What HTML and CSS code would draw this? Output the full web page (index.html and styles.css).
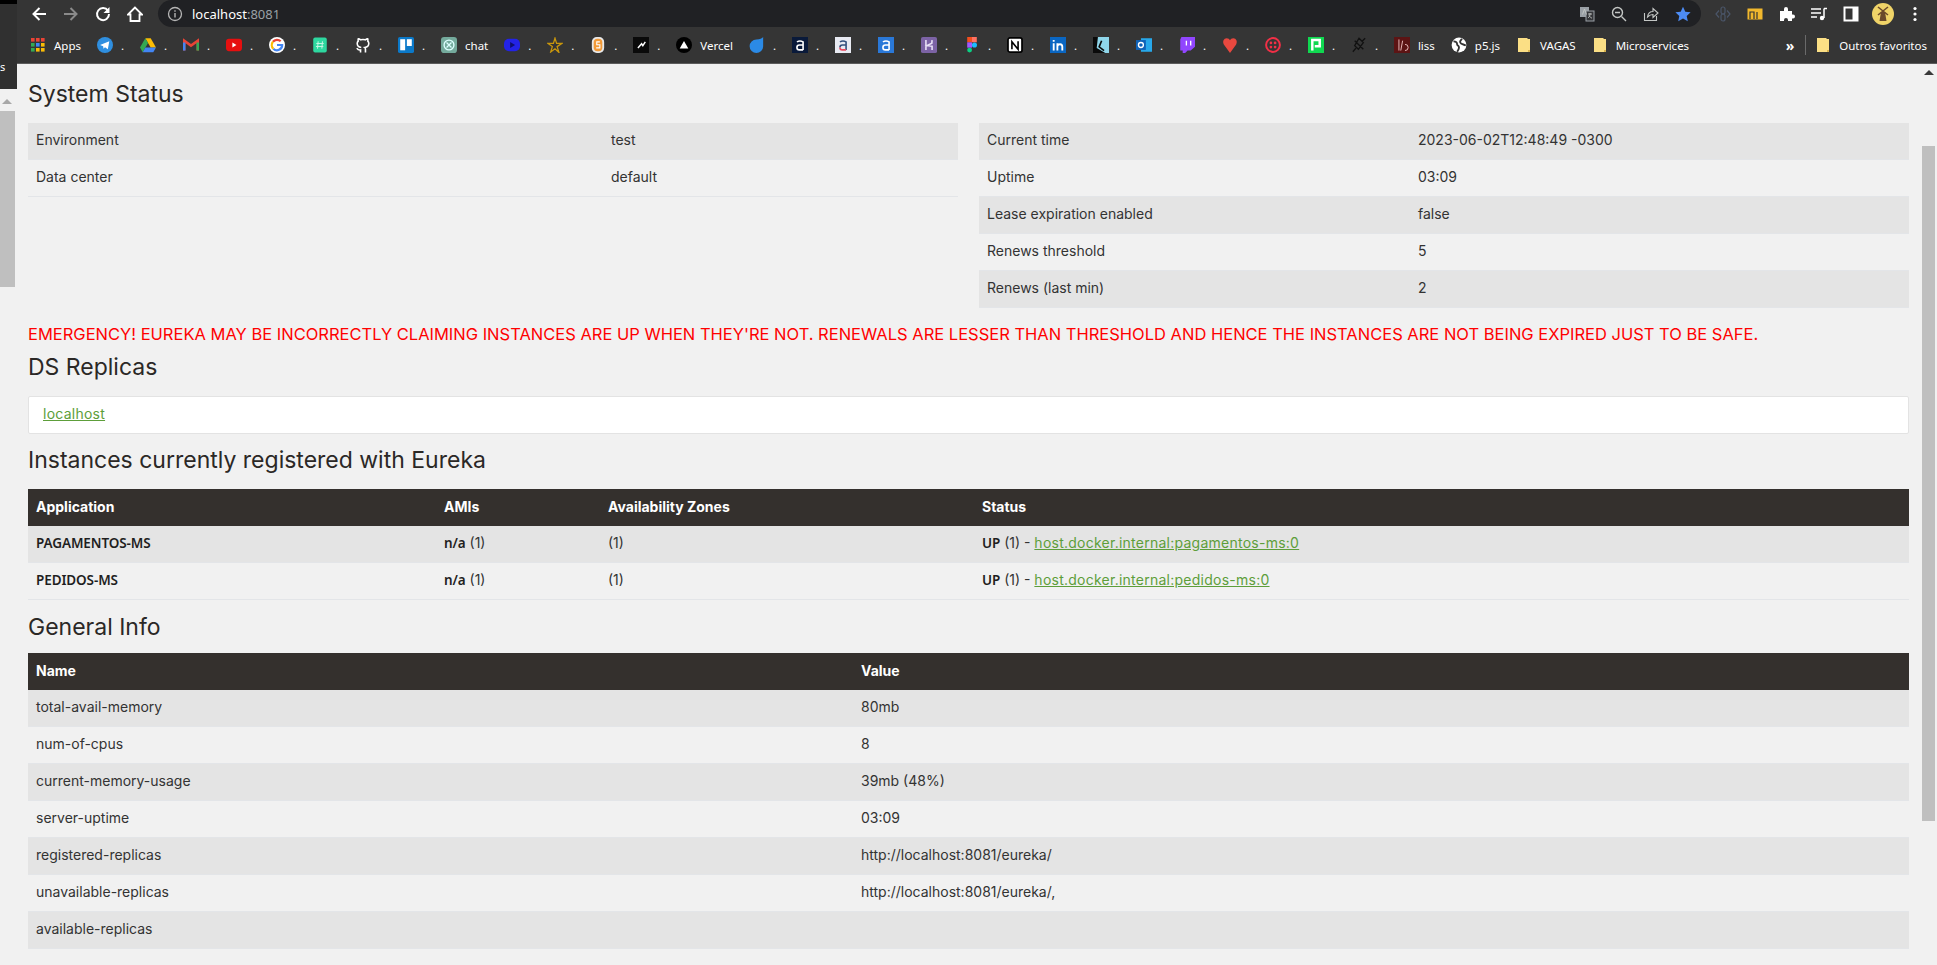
FILE: index.html
```html
<!DOCTYPE html>
<html lang="en">

<head>
    <meta charset="UTF-8">
    <meta name="viewport" content="width=device-width, initial-scale=1.0">
    <title>Eureka</title>
    <link rel="stylesheet" href="styles.css">
</head>

<body>
    <!-- Left-hand window edge -->
    <div class="side-strip">
        <div class="side-cap"></div>
        <div class="side-tab">s</div>
        <div class="side-arrow"></div>
        <div class="side-thumb"></div>
    </div>

    <div class="window">
        <!-- Browser toolbar -->
        <div class="toolbar">
            <div class="nav-buttons">
                <div class="slot"><svg class="icon" viewBox="0 0 16 16"><path d="M15 8H3M8.500 2 2.500 8l6 6" fill="none" stroke="#fff" stroke-width="2"/></svg></div>
                <div class="slot"><svg class="icon" viewBox="0 0 16 16"><path d="M1 8h12M7.500 2l6 6-6 6" fill="none" stroke="#8a8a8a" stroke-width="2"/></svg></div>
                <div class="slot"><svg class="icon" viewBox="0 0 16 16"><path d="M13 4.800A6 6 0 1 0 14 8" fill="none" stroke="#fff" stroke-width="2"/><path d="M14.500 1v6h-6z" fill="#fff"/></svg></div>
                <div class="slot"><svg class="icon" viewBox="0 0 16 16"><path d="M8 1.500 1 8.500h2.500V15h9V8.500H15z" fill="none" stroke="#fff" stroke-width="1.800"/></svg></div>
            </div>
            <div class="omnibox">
                <svg class="icon" viewBox="0 0 16 16"><circle cx="8" cy="8" r="6.500" fill="none" stroke="#b5b5b5" stroke-width="1.300"/><path d="M8 7v4.500M8 4.200v1.500" stroke="#b5b5b5" stroke-width="1.400"/></svg>
                <span class="url">localhost<span class="url-port">:8081</span></span>
                <div class="omni-actions">
                    <div class="slot"><svg class="icon" viewBox="0 0 16 16"><rect x="1" y="1" width="9" height="10" fill="#9aa0a6"/><rect x="7" y="5" width="8" height="10" fill="#35363a" stroke="#9aa0a6"/><path d="M3.500 8.500 5.500 3l2 5.500M9 8h4M11 7v1c0 2-1 3-2 4M10 9.500c1 1.500 2 2.500 3 2.500" fill="none" stroke="#c4c7c5" stroke-width=".9"/></svg></div>
                    <div class="slot"><svg class="icon" viewBox="0 0 16 16"><circle cx="6.500" cy="6.500" r="5" fill="none" stroke="#c4c7c5" stroke-width="1.400"/><path d="m10.500 10.500 4.500 4.500M4 6.500h5" stroke="#c4c7c5" stroke-width="1.400"/></svg></div>
                    <div class="slot"><svg class="icon" viewBox="0 0 16 16"><path d="M1.500 7v7.500h12V10" fill="none" stroke="#c4c7c5" stroke-width="1.100"/><path d="M4.500 11C5 7.500 7.500 5.500 10 5.500V2.500L15 7l-5 4.500V8.500C8 8.500 6 9.500 4.500 11z" fill="none" stroke="#c4c7c5" stroke-width="1.100"/></svg></div>
                    <div class="slot"><svg class="icon" viewBox="0 0 16 16"><path d="m8 .8 2.300 4.900 5.300.6-3.900 3.600 1.100 5.300L8 12.500l-4.800 2.700 1.100-5.300L.4 6.300l5.300-.6z" fill="#4d8cf5"/></svg></div>
                </div>
            </div>
            <div class="ext-icons">
                <div class="slot"><svg class="icon" viewBox="0 0 16 16"><path d="M4 4.500 1 8l3 3.500M12 4.500 15 8l-3 3.500" fill="none" stroke="#4a5568" stroke-width="1.200"/><rect x="6" y="1" width="4" height="7" rx="2" fill="none" stroke="#4a5568" stroke-width="1.200"/><rect x="6" y="8" width="4" height="7" rx="2" fill="none" stroke="#4a5568" stroke-width="1.200"/></svg></div>
                <div class="slot"><svg class="icon" viewBox="0 0 16 16"><rect x="0.500" y="2.500" width="15" height="11" fill="#f1b82d"/><path d="M3 13V6h4v7M10 6v7" fill="none" stroke="#333" stroke-width="1.200"/></svg></div>
                <div class="slot"><svg class="icon" viewBox="0 0 16 16"><path d="M1 5h4V3a2 2 0 0 1 4 0v2h4v3.500h1a2 2 0 0 1 0 4h-1V15H9v-1a2 2 0 0 0-4 0v1H1z" fill="#fff"/></svg></div>
                <div class="slot"><svg class="icon" viewBox="0 0 16 16"><path d="M0 3h10M0 7h10M0 11h6" stroke="#fff" stroke-width="1.500"/><path d="M13 2.500h3M13 2.500V12" stroke="#fff" stroke-width="1.500" fill="none"/><circle cx="11" cy="12" r="2.200" fill="#fff"/></svg></div>
                <div class="slot"><svg class="icon" viewBox="0 0 16 16"><rect x="1.500" y="1.500" width="13" height="13" fill="none" stroke="#fff" stroke-width="2"/><rect x="9.500" y="1.500" width="5" height="13" fill="#fff"/></svg></div>
                <div class="slot"><svg class="avatar" viewBox="0 0 22 22"><circle cx="11" cy="11" r="11" fill="#f0d468"/><path d="M9 9h4l1.500 9h-7z" fill="#6b4a2b"/><path d="M6 4l10 8M16 4 6 12" stroke="#6b4a2b" stroke-width="1.600"/></svg></div>
                <div class="slot"><svg class="icon" viewBox="0 0 16 16"><circle cx="8" cy="2.500" r="1.600" fill="#fff"/><circle cx="8" cy="8" r="1.600" fill="#fff"/><circle cx="8" cy="13.500" r="1.600" fill="#fff"/></svg></div>
            </div>
        </div>

        <!-- Bookmarks -->
        <div class="bookmarks">
            <div class="bm bm-text"><svg class="icon" viewBox="0 0 16 16"><rect x="1" y="1" width="3.600" height="3.600" fill="#ea4335"/><rect x="6" y="1" width="3.600" height="3.600" fill="#ea4335"/><rect x="11" y="1" width="3.600" height="3.600" fill="#ea4335"/><rect x="1" y="6" width="3.600" height="3.600" fill="#34a853"/><rect x="6" y="6" width="3.600" height="3.600" fill="#4285f4"/><rect x="11" y="6" width="3.600" height="3.600" fill="#fbbc05"/><rect x="1" y="11" width="3.600" height="3.600" fill="#34a853"/><rect x="6" y="11" width="3.600" height="3.600" fill="#fbbc05"/><rect x="11" y="11" width="3.600" height="3.600" fill="#fbbc05"/></svg><span>Apps</span></div>
            <div class="bm bm-dot"><svg class="icon" viewBox="0 0 13 13"><circle cx="6.500" cy="6.500" r="6.500" fill="#2f8fe0"/><path d="M2.500 6.500 10 3.500 8.800 10 6.500 8.300 5.300 9.500 5 7.500z" fill="#fff"/></svg><span>.</span></div>
            <div class="bm bm-dot"><svg class="icon" viewBox="0 0 13 13"><path d="M4.300 1h4.400L13 8.500H8.700z" fill="#fbbc05"/><path d="M4.300 1 0 8.500l2.200 3.800 4.300-7.500z" fill="#34a853"/><path d="M2.200 12.300h8.600L13 8.500H4.400z" fill="#4285f4"/></svg><span>.</span></div>
            <div class="bm bm-dot"><svg class="icon" viewBox="0 0 13 13"><path d="M1 11V3l5.500 4L12 3v8" fill="none" stroke="#ea4335" stroke-width="2"/><path d="M1 4.500V11" stroke="#4285f4" stroke-width="2"/><path d="M12 4.500V11" stroke="#34a853" stroke-width="2"/></svg><span>.</span></div>
            <div class="bm bm-dot"><svg class="icon" viewBox="0 0 13 13"><rect y="1.500" width="13" height="10" rx="2.500" fill="#e60f0f"/><path d="m5.200 4.500 3.300 2-3.300 2z" fill="#fff"/></svg><span>.</span></div>
            <div class="bm bm-dot"><svg class="icon" viewBox="0 0 13 13"><circle cx="6.500" cy="6.500" r="6.500" fill="#fff"/><path d="M6.500 6.500h4.200a4.200 4.200 0 0 1-7.200 3" fill="none" stroke="#4285f4" stroke-width="1.800"/><path d="M9.500 3.500a4.200 4.200 0 0 0-6.300.4" fill="none" stroke="#ea4335" stroke-width="1.800"/><path d="M3.200 3.900a4.200 4.200 0 0 0 .3 5.600" fill="none" stroke="#fbbc05" stroke-width="1.800"/></svg><span>.</span></div>
            <div class="bm bm-dot"><svg class="icon" viewBox="0 0 13 13"><rect x="1" y="0.500" width="11" height="12" rx="1.500" fill="#2ed8a0"/><path d="M5 3.500 4.500 9.500M8.500 3.500 8 9.500M3.500 5.300h6M3.200 7.700h6" stroke="#c8f5e4" stroke-width=".8"/></svg><span>.</span></div>
            <div class="bm bm-dot"><svg class="icon" viewBox="0 0 13 13"><path d="M4.500 12.500v-2c-2 .5-2.500-.7-3-1.500M8.500 12.500V10c0-.8-.2-1.200-.6-1.500 1.800-.2 3.300-1 3.300-3.200 0-.9-.3-1.500-.8-2 .2-.6.100-1.300-.1-1.800-.8 0-1.400.4-2 .8a7 7 0 0 0-3.600 0c-.6-.4-1.200-.8-2-.8-.2.500-.3 1.200-.1 1.800-.5.500-.8 1.100-.8 2 0 2.200 1.500 3 3.300 3.200" fill="none" stroke="#fff" stroke-width="1.300"/></svg><span>.</span></div>
            <div class="bm bm-dot"><svg class="icon" viewBox="0 0 13 13"><rect width="13" height="13" rx="1.500" fill="#0b79c9"/><rect x="1.800" y="1.800" width="4" height="9" fill="#fff"/><rect x="7.200" y="1.800" width="4" height="5.500" fill="#fff"/></svg><span>.</span></div>
            <div class="bm bm-text"><svg class="icon" viewBox="0 0 13 13"><rect width="13" height="13" rx="2.500" fill="#74aa9c"/><circle cx="6.500" cy="6.500" r="4" fill="none" stroke="#dff" stroke-width="1.100"/><path d="m4.500 4.500 4 4M8.500 4.500l-4 4" stroke="#dff"/></svg><span>chat</span></div>
            <div class="bm bm-dot"><svg class="icon" viewBox="0 0 13 13"><rect y="1.500" width="13" height="10" rx="4" fill="#2323e6"/><path d="m5 4 4 2.500L5 9z" fill="#0f0f70"/></svg><span>.</span></div>
            <div class="bm bm-dot"><svg class="icon" viewBox="0 0 15 15"><path d="M7.500 1 9 6h5L9.500 9l1.700 5.500-3.700-3.500L3.500 14 5 9 1 6h5z" fill="none" stroke="#c8960c" stroke-width="1.200"/></svg><span>.</span></div>
            <div class="bm bm-dot"><svg class="icon" viewBox="0 0 13 13"><rect x="1.500" y="0" width="10" height="13" rx="4" fill="#e8e8e8"/><rect x="3" y="1.500" width="7" height="10" rx="3" fill="#f29a38"/><path d="M8 4H5.500v2.300H8v2.500H5" fill="none" stroke="#fff" stroke-width=".9"/></svg><span>.</span></div>
            <div class="bm bm-dot"><svg class="icon" viewBox="0 0 13 13"><rect width="13" height="13" fill="#0a0a0a"/><path d="M4 9 7 5.500 8 7l2-3" fill="none" stroke="#fff" stroke-width="1.200"/></svg><span>.</span></div>
            <div class="bm bm-text"><svg class="icon" viewBox="0 0 13 13"><circle cx="6.500" cy="6.500" r="6.500" fill="#000"/><path d="M6.500 3.300 10 9.300H3z" fill="#fff"/></svg><span>Vercel</span></div>
            <div class="bm bm-dot"><svg class="icon" viewBox="0 0 13 13"><path d="M11.500 0v7.500a5.500 5.500 0 1 1-5.500-5.500c3 0 4.500-.8 5.500-2z" fill="#2b8ae6"/></svg><span>.</span></div>
            <div class="bm bm-dot"><svg class="icon" viewBox="0 0 13 13"><rect width="13" height="13" fill="#0a1a3a"/><path d="M4 4Q6.500 2.500 9 4v6.500M9 6.500H6Q4 6.500 4 8.500t2 2h3" fill="none" stroke="#fff" stroke-width="1.300"/></svg><span>.</span></div>
            <div class="bm bm-dot"><svg class="icon" viewBox="0 0 13 13"><rect width="13" height="13" fill="#e8eaf2"/><path d="M4 4Q6.500 2.500 9 4v6.500M9 6.500H6Q4 6.500 4 8.500" fill="none" stroke="#33507e" stroke-width="1.300"/><path d="M4 8.500q0 2 2 2h3" fill="none" stroke="#e84a5f" stroke-width="1.300"/></svg><span>.</span></div>
            <div class="bm bm-dot"><svg class="icon" viewBox="0 0 13 13"><rect width="13" height="13" fill="#2a78d8"/><path d="M4 4Q6.500 2.500 9 4v6.500M9 6.500H6Q4 6.500 4 8.500t2 2h3" fill="none" stroke="#fff" stroke-width="1.300"/></svg><span>.</span></div>
            <div class="bm bm-dot"><svg class="icon" viewBox="0 0 13 13"><rect width="13" height="13" rx="1.500" fill="#7c63a5"/><path d="M4 2.500v8M9 2.500 8.800 5 5 7l4 .5v3" fill="none" stroke="#e8e0f5" stroke-width="1.300"/></svg><span>.</span></div>
            <div class="bm bm-dot"><svg class="icon" viewBox="0 0 13 15"><rect x="2" y="0" width="4.500" height="5" fill="#f24e1e"/><rect x="6.500" y="0" width="4.500" height="5" fill="#ff7262"/><rect x="2" y="5" width="4.500" height="5" fill="#a259ff"/><circle cx="8.800" cy="7.500" r="2.400" fill="#1abcfe"/><rect x="2" y="10" width="4.500" height="4.500" rx="2.200" fill="#0acf83"/></svg><span>.</span></div>
            <div class="bm bm-dot"><svg class="icon" viewBox="0 0 13 13"><rect x=".8" y=".8" width="11.400" height="11.400" rx="1.500" fill="#fff" stroke="#000" stroke-width="1.400"/><path d="M4 10V3.800L9 10V3.500" fill="none" stroke="#000" stroke-width="1.300"/></svg><span>.</span></div>
            <div class="bm bm-dot"><svg class="icon" viewBox="0 0 13 13"><rect width="13" height="13" fill="#0a66c2"/><path d="M3 5v6M3 2.500v1.300M6 11V5M6 7.500c.5-2 4-2.500 4 .5v3" fill="none" stroke="#fff" stroke-width="1.500"/></svg><span>.</span></div>
            <div class="bm bm-dot"><svg class="icon" viewBox="0 0 13 13"><rect width="13" height="13" fill="#8fd6ea"/><path d="M0 0h4L3 9l7 4H0z" fill="#0a0a0a"/><path d="M7 3 5 8l4 3" fill="none" stroke="#0a0a0a" stroke-width="1.300"/></svg><span>.</span></div>
            <div class="bm bm-dot"><svg class="icon" viewBox="0 0 13 13"><rect x="4" y="1" width="9" height="11" fill="#28a8ea"/><rect x="0" y="2.500" width="8" height="8" fill="#0f62b8"/><circle cx="4" cy="6.500" r="2" fill="none" stroke="#fff" stroke-width="1.100"/></svg><span>.</span></div>
            <div class="bm bm-dot"><svg class="icon" viewBox="0 0 13 13"><path d="M2 0h11v8l-3.500 3H7l-2 2H3v-2H1V2z" fill="#9146ff"/><path d="M6 3v4M9.500 3v4" stroke="#fff" stroke-width="1.100"/></svg><span>.</span></div>
            <div class="bm bm-dot"><svg class="icon" viewBox="0 0 13 13"><path d="M6.500 13 1.500 6C.2 3.500 1.500 1 3.800 1c1.300 0 2.200.7 2.700 1.700C7 1.700 7.900 1 9.200 1c2.300 0 3.600 2.500 2.300 5z" fill="#e8483f"/></svg><span>.</span></div>
            <div class="bm bm-dot"><svg class="icon" viewBox="0 0 13 13"><circle cx="6.500" cy="6.500" r="5.600" fill="none" stroke="#f22f46" stroke-width="1.600"/><circle cx="4.800" cy="4.800" r="1.100" fill="#f22f46"/><circle cx="8.200" cy="4.800" r="1.100" fill="#f22f46"/><circle cx="4.800" cy="8.200" r="1.100" fill="#f22f46"/><circle cx="8.200" cy="8.200" r="1.100" fill="#f22f46"/></svg><span>.</span></div>
            <div class="bm bm-dot"><svg class="icon" viewBox="0 0 13 13"><rect width="13" height="13" fill="#0fd850"/><path d="M3.500 11V2.500h6v5h-4" fill="none" stroke="#fff" stroke-width="2"/></svg><span>.</span></div>
            <div class="bm bm-dot"><svg class="icon" viewBox="0 0 13 13"><path d="M6.500 1 10 4.500 6 10 3 7zM1.500 12 4 9M11.500 1 9 3.500M3 3l7 7" fill="none" stroke="#111" stroke-width="1.100"/></svg><span>.</span></div>
            <div class="bm bm-text"><svg class="icon" viewBox="0 0 13 13"><rect width="13" height="13" fill="#5c1414"/><path d="M4 2v9M7 3 5.500 11M9 6a2 2 0 1 1 0 5" fill="none" stroke="#e8b8b8" stroke-width=".8"/></svg><span>liss</span></div>
            <div class="bm bm-text"><svg class="icon" viewBox="0 0 13 13"><circle cx="6.500" cy="6.500" r="6" fill="#fff"/><path d="M2 3.500c2 0 3 1 3 2.500 0 1 1.500 1 1.500 2.500S5.500 11 5 12M9 1.500c-1 1-2 1.500-1.500 3S11 6 12 7" fill="none" stroke="#333" stroke-width="1.500"/></svg><span>p5.js</span></div>
            <div class="bm bm-text"><svg class="icon" viewBox="0 0 16 16"><path d="M2 1h9l1 1h2v13H2z" fill="#fbdf85"/><path d="M12 13h2v2h-2z" fill="#d8b24e"/></svg><span>VAGAS</span></div>
            <div class="bm bm-text"><svg class="icon" viewBox="0 0 16 16"><path d="M2 1h9l1 1h2v13H2z" fill="#fbdf85"/><path d="M12 13h2v2h-2z" fill="#d8b24e"/></svg><span>Microservices</span></div>
            <div class="bm-end">
                <span class="bm-more">&raquo;</span>
                <span class="bm-sep"></span>
                <div class="bm"><svg class="icon" viewBox="0 0 16 16"><path d="M2 1h9l1 1h2v13H2z" fill="#fbdf85"/><path d="M12 13h2v2h-2z" fill="#d8b24e"/></svg><span>Outros favoritos</span></div>
            </div>
        </div>

        <div class="viewport">
            <div class="content">
                <h3 class="first">System Status</h3>
                <div class="status-cols">
                    <table class="info">
                        <tbody>
                            <tr><td class="col-env">Environment</td><td>test</td></tr>
                            <tr><td>Data center</td><td>default</td></tr>
                        </tbody>
                    </table>
                    <table class="info">
                        <tbody>
                            <tr><td class="col-time">Current time</td><td>2023-06-02T12:48:49 -0300</td></tr>
                            <tr><td>Uptime</td><td>03:09</td></tr>
                            <tr><td>Lease expiration enabled</td><td>false</td></tr>
                            <tr><td>Renews threshold</td><td>5</td></tr>
                            <tr><td>Renews (last min)</td><td>2</td></tr>
                        </tbody>
                    </table>
                </div>

                <h4 class="emergency">EMERGENCY! EUREKA MAY BE INCORRECTLY CLAIMING INSTANCES ARE UP WHEN THEY'RE NOT. RENEWALS ARE LESSER THAN THRESHOLD AND HENCE THE INSTANCES ARE NOT BEING EXPIRED JUST TO BE SAFE.</h4>

                <h3 class="replicas-title">DS Replicas</h3>
                <div class="replicas"><a href="#">localhost</a></div>

                <h3>Instances currently registered with Eureka</h3>
                <table class="info">
                    <thead>
                        <tr><th class="col-app">Application</th><th class="col-ami">AMIs</th><th class="col-zone">Availability Zones</th><th>Status</th></tr>
                    </thead>
                    <tbody>
                        <tr><td><b>PAGAMENTOS-MS</b></td><td><b>n/a</b> (1)</td><td>(1)</td><td><b>UP</b> (1) - <a href="#">host.docker.internal:pagamentos-ms:0</a></td></tr>
                        <tr><td><b>PEDIDOS-MS</b></td><td><b>n/a</b> (1)</td><td>(1)</td><td><b>UP</b> (1) - <a href="#">host.docker.internal:pedidos-ms:0</a></td></tr>
                    </tbody>
                </table>

                <h3 class="general-title">General Info</h3>
                <table class="info">
                    <thead>
                        <tr><th class="col-name">Name</th><th>Value</th></tr>
                    </thead>
                    <tbody>
                        <tr><td>total-avail-memory</td><td>80mb</td></tr>
                        <tr><td>num-of-cpus</td><td>8</td></tr>
                        <tr><td>current-memory-usage</td><td>39mb (48%)</td></tr>
                        <tr><td>server-uptime</td><td>03:09</td></tr>
                        <tr><td>registered-replicas</td><td>http://localhost:8081/eureka/</td></tr>
                        <tr><td>unavailable-replicas</td><td>http://localhost:8081/eureka/,</td></tr>
                        <tr><td>available-replicas</td><td></td></tr>
                    </tbody>
                </table>
            </div>

            <div class="scrollbar">
                <div class="scroll-arrow"></div>
                <div class="scroll-thumb"></div>
            </div>
        </div>
    </div>
</body>

</html>
```

FILE: styles.css
```css
html, body {
    height: 100%;
    margin: 0;
    overflow: hidden;
}

body {
    display: flex;
    font-family: "Noto Sans", Arial, sans-serif;
    font-size: 11.5px;
    color: #fff;
    background-color: #f1f1f1;
}

/* Left-hand window edge */
.side-strip {
    width: 17px;
    flex-shrink: 0;
}

.side-cap {
    height: 4px;
    background-color: #000;
}

.side-tab {
    height: 85px;
    box-sizing: border-box;
    padding-top: 54px;
    background-color: #303030;
    font-size: 11px;
    line-height: 18px;
}

.side-arrow {
    width: 0;
    height: 0;
    margin: 10px 0 0 2px;
    border-left: 5px solid transparent;
    border-right: 5px solid transparent;
    border-bottom: 5px solid #a8a8a8;
}

.side-thumb {
    width: 15px;
    height: 176px;
    margin-top: 7px;
    background-color: #bfbfbf;
}

.window {
    flex: 1;
    min-width: 0;
    display: flex;
    flex-direction: column;
}

/* Browser toolbar */
.toolbar {
    display: flex;
    align-items: center;
    height: 27px;
    background-color: #353535;
    flex-shrink: 0;
}

.slot {
    width: 32px;
    display: flex;
    justify-content: center;
    align-items: center;
    flex-shrink: 0;
}

.icon {
    width: 16px;
    height: 16px;
    flex-shrink: 0;
}

.nav-buttons {
    display: flex;
    padding-left: 6px;
}

.omnibox {
    display: flex;
    align-items: center;
    width: 1543px;
    height: 27px;
    margin-left: 7px;
    padding-left: 9px;
    box-sizing: border-box;
    background-color: #202124;
    border-radius: 14px;
}

.url {
    margin-left: 9px;
    font-size: 13px;
}

.url-port {
    color: #9aa0a6;
}

.omni-actions {
    display: flex;
    margin-left: auto;
    padding-right: 2px;
}

.ext-icons {
    display: flex;
    margin-left: 6px;
}

.avatar {
    width: 22px;
    height: 22px;
}

/* Bookmarks */
.bookmarks {
    display: flex;
    align-items: center;
    height: 36px;
    padding-left: 13px;
    padding-right: 10px;
    background-color: #353535;
    border-bottom: 1px solid #5c5c5c;
    flex-shrink: 0;
}

.bm {
    display: flex;
    align-items: center;
    gap: 8px;
    flex-shrink: 0;
    white-space: nowrap;
}

.bm-dot {
    width: 43px;
}

.bm-text {
    padding-right: 16px;
}

.bm-end {
    display: flex;
    align-items: center;
    margin-left: auto;
}

.bm-more {
    font-size: 14px;
    font-weight: bold;
}

.bm-sep {
    width: 1px;
    height: 20px;
    margin: 0 9px 0 11px;
    background-color: #6a6a6a;
}

/* Page area */
.viewport {
    display: flex;
    flex: 1;
    min-height: 0;
}

.content {
    flex: 1;
    min-width: 0;
    padding-left: 11px;
    font-family: Inter, "Noto Sans", Arial, sans-serif;
    font-size: 14px;
    color: #333;
}

h3 {
    font-size: 23px;
    font-weight: 400;
    line-height: 24px;
    color: #2b2826;
    margin: 14px 0 17px;
}

h3.first {
    margin-top: 18px;
}

h3.general-title {
    margin-top: 15px;
    margin-bottom: 14px;
}

.status-cols {
    display: flex;
    gap: 21px;
    align-items: flex-start;
}

.status-cols .info {
    flex: 1;
    min-width: 0;
}

.info {
    width: 100%;
    border-collapse: collapse;
    table-layout: fixed;
}

.info td, .info th {
    height: 33px;
    padding: 0 8px 3px;
    text-align: left;
    border-bottom: 1px solid #e3e5e8;
}

.info th {
    height: 34px;
    font-weight: bold;
    color: #fff;
    background-color: #34302d;
    border-bottom: 0;
}

.info b {
    font-family: "Noto Sans", Arial, sans-serif;
    font-size: 13.5px;
    font-weight: 600;
    letter-spacing: -.1px;
    color: #1f1f1f;
}

.info tbody tr:nth-child(odd) td {
    background-color: #e4e4e4;
}

.col-env {
    width: 559px;
}

.col-time {
    width: 415px;
}

.col-app {
    width: 392px;
}

.col-ami {
    width: 148px;
}

.col-zone {
    width: 358px;
}

.col-name {
    width: 809px;
}

.emergency {
    margin: 14px 0 0;
    font-size: 16.5px;
    font-weight: 400;
    line-height: 24px;
    color: #ff0000;
}

h3.replicas-title {
    margin-top: 9px;
}

.replicas {
    height: 36px;
    line-height: 33px;
    padding-left: 14px;
    background-color: #fff;
    border: 1px solid #e3e3e3;
    border-radius: 2px;
}

a {
    color: #5d9e3a;
    text-decoration: underline;
    letter-spacing: .25px;
}

.scrollbar {
    width: 28px;
    flex-shrink: 0;
    box-sizing: border-box;
    padding-left: 13px;
}

.scroll-arrow {
    width: 0;
    height: 0;
    margin: 6px 0 0 2px;
    border-left: 5px solid transparent;
    border-right: 5px solid transparent;
    border-bottom: 5px solid #3a3a3a;
}

.scroll-thumb {
    width: 13px;
    height: 675px;
    margin-top: 71px;
    background-color: #bfbfbf;
}
```
